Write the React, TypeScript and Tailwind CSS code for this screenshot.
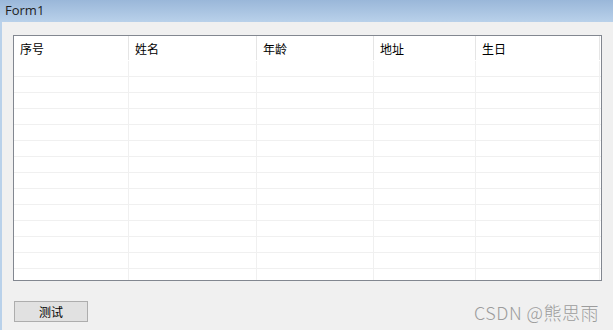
import React from 'react';

const columns = [
  { title: '序号', w: 'w-[115px]' },
  { title: '姓名', w: 'w-[128px]' },
  { title: '年龄', w: 'w-[117px]' },
  { title: '地址', w: 'w-[102px]' },
  { title: '生日', w: 'w-[124px]' },
];

const rows = Array.from({ length: 14 }, (_, i) => i);

const App = () => {
  return (
    <div className="flex h-[330px] w-[613px] flex-col overflow-hidden bg-[#f0f0f0] font-['Noto_Sans_CJK_SC',sans-serif]">
      {/* title bar */}
      <div className="flex h-[22px] items-center bg-gradient-to-b from-[#9ab7d9] to-[#b9d1ea] pl-[5px] text-[13px] text-[#1e1e1e] font-['Open_Sans','Noto_Sans_CJK_SC',sans-serif]">
        Form1
      </div>

      <div className="flex flex-1 border-l-2 border-[#b9d1ea]">
        <div className="flex flex-1 flex-col pl-[11px] pt-[13px]">
          {/* list view */}
          <div className="h-[246px] w-[589px] overflow-hidden border border-[#828790] bg-white">
            <div className="flex h-[25px]">
              {columns.map((c) => (
                <div
                  key={c.title}
                  className={`${c.w} flex h-[24px] shrink-0 items-center border-r border-[#e5e5e5] pl-[6px] pt-[2px] text-[12px] text-black`}
                >
                  {c.title}
                </div>
              ))}
            </div>
            {rows.map((r) => (
              <div key={r} className="flex h-[16px] border-b border-[#f0f0f0]">
                {columns.map((c) => (
                  <div key={c.title} className={`${c.w} h-full shrink-0 border-r border-[#f0f0f0]`} />
                ))}
              </div>
            ))}
          </div>

          {/* bottom bar */}
          <div className="mt-[20px] flex items-center justify-between pr-[14px]">
            <button className="ml-[1px] flex h-[21px] w-[74px] items-center justify-center border border-[#adadad] bg-[#e1e1e1] text-[12px] text-black">
              测试
            </button>
            <span className="text-[18px] font-light leading-none tracking-[0.5px] text-[#9c9c9c]">CSDN @熊思雨</span>
          </div>
        </div>
      </div>
    </div>
  );
};

export default App;
